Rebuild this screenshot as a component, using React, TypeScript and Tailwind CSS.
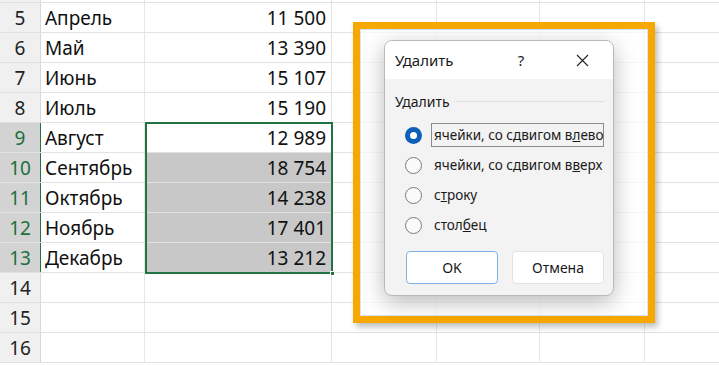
import React from "react";

const rows: { n: number; a: string; b: string }[] = [
  { n: 4, a: "Март", b: "" },
  { n: 5, a: "Апрель", b: "11 500" },
  { n: 6, a: "Май", b: "13 390" },
  { n: 7, a: "Июнь", b: "15 107" },
  { n: 8, a: "Июль", b: "15 190" },
  { n: 9, a: "Август", b: "12 989" },
  { n: 10, a: "Сентябрь", b: "18 754" },
  { n: 11, a: "Октябрь", b: "14 238" },
  { n: 12, a: "Ноябрь", b: "17 401" },
  { n: 13, a: "Декабрь", b: "13 212" },
  { n: 14, a: "", b: "" },
  { n: 15, a: "", b: "" },
  { n: 16, a: "", b: "" },
];

function Radio({ checked }: { checked?: boolean }) {
  if (checked)
    return (
      <span className="w-[17px] h-[17px] rounded-full bg-[#0f5fb8] flex items-center justify-center shrink-0">
        <span className="w-[7px] h-[7px] rounded-full bg-white" />
      </span>
    );
  return <span className="w-[17px] h-[17px] rounded-full border border-[#7a7a7a] bg-[#fafafa] shrink-0" />;
}

export default function App() {
  return (
    <div
      className="relative w-[719px] h-[365px] overflow-hidden bg-white"
      style={{ fontFamily: '"Noto Sans", "Open Sans", sans-serif' }}
    >
      {/* Sheet grid */}
      <div className="flex flex-col mt-[-27px]">
        {rows.map((r) => {
          const sel = r.n >= 9 && r.n <= 13;
          const fill = r.n >= 10 && r.n <= 13;
          return (
            <div key={r.n} className="flex h-[30px] border-b border-[#e2e2e2]">
              <div
                className={`w-[41px] shrink-0 flex items-end justify-center pb-[1px] text-[19px] leading-[26px] border-r ${
                  sel ? "bg-[#d3d3d3] text-[#1e6e3e] border-[#217346]" : "bg-[#f0f0f0] text-[#222] border-[#d8d8d8]"
                }`}
              >
                {r.n === 4 ? "" : r.n}
              </div>
              <div className="w-[104px] shrink-0 flex items-end pl-[4px] pb-[1px] text-[19px] leading-[26px] text-[#111] border-r border-[#e6e6e6]">
                {r.a}
              </div>
              <div
                className={`w-[187px] shrink-0 flex items-end justify-end pr-[5px] pb-[1px] text-[19px] leading-[26px] text-[#111] border-r border-[#e2e2e2] ${
                  fill ? "bg-[#c8c8c8]" : ""
                }`}
              >
                {r.b}
              </div>
              <div className="w-[105px] shrink-0 border-r border-[#e6e6e6]" />
              <div className="w-[103px] shrink-0 border-r border-[#e6e6e6]" />
              <div className="w-[105px] shrink-0 border-r border-[#e6e6e6]" />
              <div className="flex-1" />
            </div>
          );
        })}
      </div>

      {/* Selection border */}
      <div className="absolute left-[145px] top-[122px] w-[188px] h-[152px] border-2 border-[#217346] pointer-events-none" />
      <div className="absolute left-[330px] top-[271px] w-[5px] h-[5px] bg-[#217346] border border-white" />

      {/* Orange highlight frame */}
      <div className="absolute left-[353px] top-[22px] w-[302px] h-[301px] border-[7px] border-[#f7a800] shadow-[3px_4px_6px_rgba(0,0,0,0.25)] bg-white/70">
        <div className="w-full h-full border border-[#d7e4f4] pl-[23px] pt-[10px]">
          {/* Dialog */}
          <div className="w-[230px] h-[256px] rounded-[8px] border border-[#b9b9b9] bg-[#f3f3f3] shadow-[0_6px_22px_rgba(0,0,0,0.28)] flex flex-col overflow-hidden">
            <div className="h-[38px] bg-white flex items-center text-[15px] text-[#1a1a1a] shrink-0">
              <span className="pl-[10px] w-[129px]">Удалить</span>
              <span className="w-[14px] text-center">?</span>
              <span className="ml-[47px] w-[14px] h-[14px] flex items-center justify-center">
                <svg width="13" height="13" viewBox="0 0 13 13">
                  <path d="M1 1 L12 12 M12 1 L1 12" stroke="#222" strokeWidth="1.1" fill="none" />
                </svg>
              </span>
            </div>
            <div className="flex-1 flex flex-col">
              <div className="flex items-center pt-[11px] pl-[10px] pr-[8px] h-[33px] text-[14px] text-[#1a1a1a]">
                <span>Удалить</span>
                <span className="flex-1 ml-[6px] h-px bg-[#e0e0e0]" />
              </div>
              <div className="flex flex-col pt-[8px] pl-[20px] text-[13.5px] text-[#1a1a1a]">
                <div className="h-[30px] flex items-center">
                  <Radio checked />
                  <span className="ml-[9px] border border-[#8c8c8c] px-[2px] h-[24px] flex items-center w-[173px] whitespace-nowrap">
                    ячейки, со сдвигом в<u>л</u>ево
                  </span>
                </div>
                <div className="h-[30px] flex items-center">
                  <Radio />
                  <span className="ml-[12px] whitespace-nowrap">
                    ячейки, со сдвигом в<u>в</u>ерх
                  </span>
                </div>
                <div className="h-[30px] flex items-center">
                  <Radio />
                  <span className="ml-[12px]">
                    с<u>т</u>року
                  </span>
                </div>
                <div className="h-[30px] flex items-center">
                  <Radio />
                  <span className="ml-[12px]">
                    стол<u>б</u>ец
                  </span>
                </div>
              </div>
              <div className="flex pl-[21px] gap-[14px] mt-[11px] text-[14px] text-[#1a1a1a]">
                <button className="w-[92px] h-[33px] rounded-[4px] bg-white border border-[#7fb0e4] flex items-center justify-center">
                  OK
                </button>
                <button className="w-[92px] h-[33px] rounded-[4px] bg-white border border-[#e3e3e3] flex items-center justify-center">
                  Отмена
                </button>
              </div>
            </div>
          </div>
        </div>
      </div>
    </div>
  );
}
